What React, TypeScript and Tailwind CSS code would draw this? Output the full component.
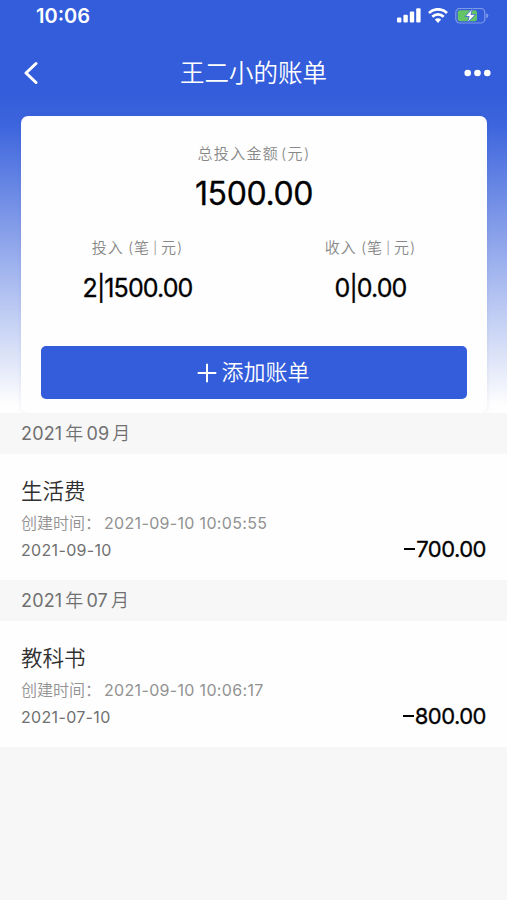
import React from "react";

type Bill = { month: string; title: string; created: string; date: string; amount: string };

const bills: Bill[] = [
  { month: "09", title: "生活费", created: "2021-09-10 10:05:55", date: "2021-09-10", amount: "700.00" },
  { month: "07", title: "教科书", created: "2021-09-10 10:06:17", date: "2021-07-10", amount: "800.00" },
];

function StatusBar() {
  return (
    <div className="flex h-8 items-center justify-between pr-[18px] pl-9">
      <span className="text-[20px] leading-8 font-semibold">10:06</span>
      <div className="flex items-center gap-[7px]">
        <svg width="24" height="16" viewBox="0 0 24 16" fill="white">
          <rect x="0" y="9.6" width="4.4" height="5" rx="1.1" />
          <rect x="6.4" y="6.8" width="4.4" height="7.8" rx="1.1" />
          <rect x="12.8" y="3.4" width="4.4" height="11.2" rx="1.1" />
          <rect x="19.2" y="0.2" width="4.4" height="14.4" rx="1.1" />
        </svg>
        <svg width="20" height="16" viewBox="0 0 20 16" fill="none" stroke="white" strokeWidth="2.8">
          <path d="M1 4.900C6.100.100 13.900.100 19 4.900" />
          <path d="M4.300 8.700C7.600 5.600 12.400 5.600 15.700 8.700" />
          <path d="M10 14.900 6.800 11.600Q10 8.900 13.200 11.600Z" fill="white" stroke="none" />
        </svg>
        <svg width="34" height="16" viewBox="0 0 34 16">
          <rect x="0.8" y="0.4" width="29" height="14.6" rx="4" fill="none" stroke="#7f9ae9" strokeWidth="1.2" />
          <path d="M31.2 5.300Q33.400 6 33.400 7.700T31.200 10.200Z" fill="#7f9ae9" />
          <rect x="2.7" y="2.200" width="19.300" height="11" rx="2.200" fill="#65c466" />
          <path d="M17.400 .7 10.100 8.500H14.200L12.400 14.700 20.600 6.600H16Z" fill="white" stroke="#355fdb" strokeWidth="0.8" />
        </svg>
      </div>
    </div>
  );
}

function NavBar() {
  return (
    <div className="flex h-[84px] items-center justify-between pr-4 pb-0.5 pl-6">
      <svg width="19" height="24" viewBox="0 0 19 24" fill="none" stroke="white" strokeWidth="3" strokeLinecap="round" strokeLinejoin="round">
        <path d="M12 2.500 2 12l10 9.500" />
      </svg>
      <h1 className="text-[24.500px] leading-8 font-[350]">王二小的账单</h1>
      <svg width="27" height="8" viewBox="0 0 27 8" fill="white">
        <circle cx="3.700" cy="4" r="3.300" />
        <circle cx="13.500" cy="4" r="3.300" />
        <circle cx="23.300" cy="4" r="3.300" />
      </svg>
    </div>
  );
}

function Stat({ label, value }: { label: string; value: string }) {
  return (
    <div className="flex flex-1 flex-col items-center">
      <span className="flex h-6 items-center text-[15px] leading-6 font-[350] tracking-[1px] text-[#888]">
        {label}<span className="ml-1">(</span>笔<span className="mx-[3px] text-[12px]">|</span>元<span>)</span>
      </span>
      <span className="mt-3 h-8 text-[25px] leading-8 tracking-[-0.900px] text-black [-webkit-text-stroke:0.3px_black]">
        {value}
      </span>
    </div>
  );
}

function SummaryCard() {
  return (
    <section className="mr-5 ml-[21px] flex h-[297px] flex-col rounded-[7px] bg-[#fefefe] px-5 pt-[26px] shadow-[0_0_5px_rgba(60,80,160,0.09)]">
      <div className="flex h-6 items-center justify-center text-[15px] font-[350] tracking-[1.300px] text-[#888]">
        总投入金额<span className="ml-0.5">(</span>元<span>)</span>
      </div>
      <div className="mt-2 flex h-10 items-center justify-center text-[32px] tracking-[-0.400px] text-black [-webkit-text-stroke:0.3px_black]">1500.00</div>
      <div className="-mx-5 mt-[22px] flex">
        <Stat label="投入" value="2|1500.00" />
        <Stat label="收入" value="0|0.00" />
      </div>
      <button className="mt-[42px] flex h-[53px] items-center justify-center gap-1 rounded-[5px] bg-[#335ddb] pr-px text-[22px] font-[350] text-white">
        <svg width="20" height="20" viewBox="0 0 20 20" stroke="white" strokeWidth="2">
          <path d="M.7 10h18.600M10 .7v18.600" />
        </svg>
        添加账单
      </button>
    </section>
  );
}

function BillGroup({ bill }: { bill: Bill }) {
  return (
    <section>
      <h2 className="flex h-[41px] items-center bg-[#f7f7f7] pl-[21px] text-[18px] tracking-[0.150px] text-[#707070]">
        2021<span className="mx-[3px] font-[350]">年</span>{bill.month}<span className="ml-[3px] font-[350]">月</span>
      </h2>
      <div className="flex h-[126px] items-end justify-between bg-[#fefefe] pr-[21px] pb-[17px] pl-[21px]">
        <div className="pb-[1.500px]">
          <h3 className="text-[21.500px] leading-8 font-[350] text-[#303030]">{bill.title}</h3>
          <p className="mt-1 flex text-[16px] leading-6 text-[#929292]">
            <span className="w-[83px] font-[350]">创建时间：</span>
            <span className="tracking-[0.330px]">{bill.created}</span>
          </p>
          <p className="mt-[3px] text-[16px] leading-6 tracking-[0.330px] text-[#707070]">{bill.date}</p>
        </div>
        <span className="flex items-center text-[22px] leading-7 tracking-[-0.500px] text-black [-webkit-text-stroke:0.3px_black]">
          <span className="mr-px h-[2px] w-[11px] bg-black" />
          {bill.amount}
        </span>
      </div>
    </section>
  );
}

export default function App() {
  return (
    <main className="h-[900px] w-[507px] overflow-hidden bg-[#f7f7f7] font-['Inter','Noto_Sans_CJK_SC',sans-serif]">
      <header className="h-[413px] bg-[linear-gradient(to_bottom,#335ddb_0px,#335ddb_95px,#3d65dd_125px,#fefefe_405px)] text-white">
        <StatusBar />
        <NavBar />
        <SummaryCard />
      </header>
      {bills.map((bill) => (
        <BillGroup key={bill.month} bill={bill} />
      ))}
    </main>
  );
}
